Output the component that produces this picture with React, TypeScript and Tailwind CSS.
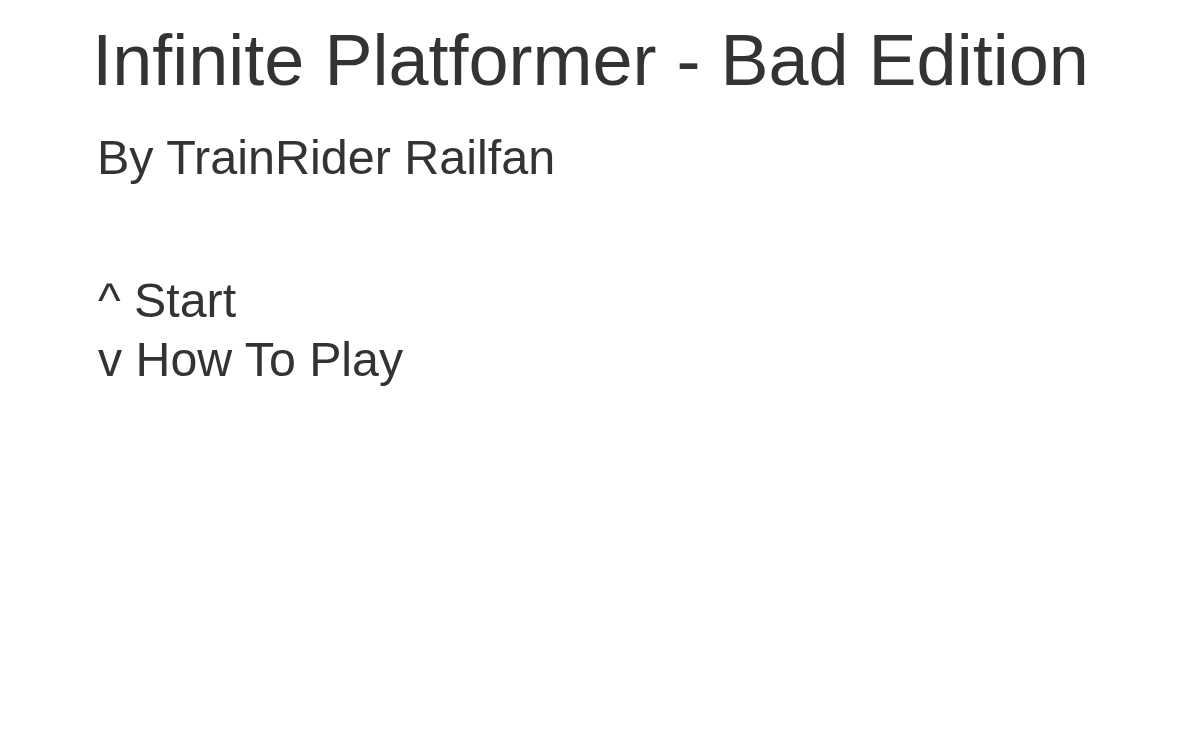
export default function App() {
  return (
    <div className="min-h-screen bg-white text-[#333333] font-['Liberation_Sans',Arial,sans-serif]">
      <h1 className="pt-[24px] text-center text-[72px] leading-none font-normal">
        Infinite Platformer - Bad Edition
      </h1>
      <p className="mt-[37px] pl-[97px] text-[48.5px] leading-none">By TrainRider Railfan</p>
      <div className="mt-[89px] pl-[98px] text-[48.3px] leading-[59px]">
        <div>^ Start</div>
        <div>v How To Play</div>
      </div>
    </div>
  );
}
